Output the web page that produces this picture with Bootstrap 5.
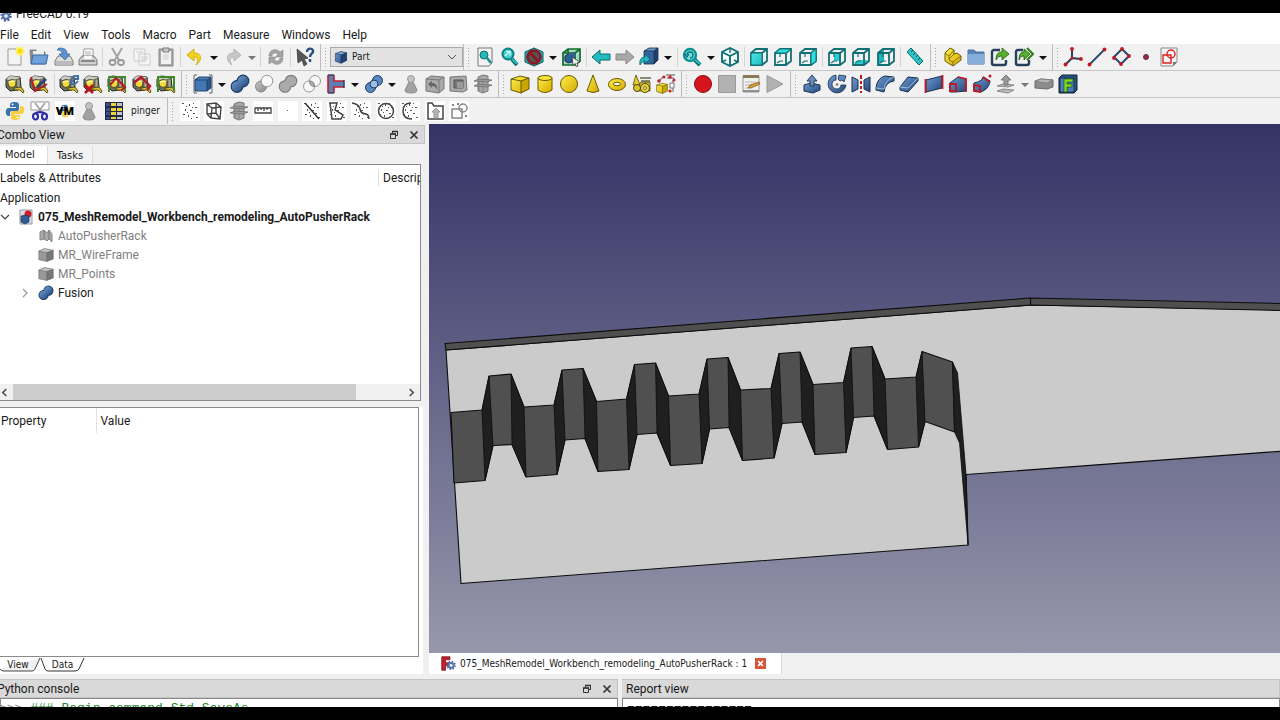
<!DOCTYPE html>
<html lang="en">
<head>
<meta charset="utf-8">
<meta name="viewport" content="width=device-width, initial-scale=1">
<title>FreeCAD 0.19</title>
<link href="https://cdn.jsdelivr.net/npm/bootstrap@5.3.0/dist/css/bootstrap.min.css" rel="stylesheet">
<style>
  :root { --ui: #f0f0f0; --title: #d9d9d9; --edge: #8a8a8a; }
  body { font-family: Roboto, "Open Sans", sans-serif; font-size: 12px; line-height: 16px; color: #1a1a1a; background: #000; padding: 13px 0; }
  button { color: inherit; }
  .tahoma { font-family: "DejaVu Sans Condensed", "DejaVu Sans", sans-serif; font-size: 10px; }
  .window { background: var(--ui); }
  .caption { height: 12px; background: #fff; padding-bottom: 3px; }
  .caption svg { width: 12px; height: 12px; }
  .menus { height: 19px; background: #fff; gap: 12px; }
  .menus a { color: #1a1a1a; text-decoration: none; }
  .bars { height: 27px; border-bottom: 1px solid #c6c6c6; background: #f1f1f1; }
  .bars:last-child { height: 26px; border-bottom: 0; }
  .tools { padding: 0 3px; border-right: 1px solid #bcbcbc; flex: none; }
  .tools:last-child { border-right: 0; }
  .tools svg { width: 20px; height: 20px; display: block; }
  .tbtn { width: 24px; height: 24px; border: 0; background: none; padding: 2px; }
  .drop { width: 13px; height: 24px; border: 0; background: none; padding: 0; }
  .drop::after { content: ""; display: block; margin: 2px auto 0; width: 0; border: 4px solid transparent; border-top-color: #111; border-bottom: 0; }
  .drop:disabled::after { border-top-color: #777; }
  .rule { width: 1px; height: 20px; margin: 0 2px; background: #d4d4d4; }
  .grip { width: 3px; height: 21px; margin-right: 3px; background: radial-gradient(circle, #a8a8a8 1px, transparent 1px) 0 0 / 3px 3px; }
  .w-file { width: 321px; } .w-bench { width: 143px; } .w-view { width: 467px; } .w-struct { width: 122px; } .w-sketch { width: 131px; }
  .w-measure { width: 182px; } .w-bool { width: 317px; } .w-solid { width: 183px; } .w-macro { width: 109px; } .w-part { width: 292px; }
  .w-custom { width: 168px; } .w-remodel { width: 306px; }
  .bench { height: 20px; border: 1px solid #aaa; background: #e2e2e2; padding: 0 3px; }
  .bench svg { width: 14px; height: 14px; flex: none; }
  .bench select { appearance: none; border: 0; background: none; padding: 0 4px; line-height: 16px; color: #1a1a1a; }
  .side { flex: 0 0 429px; }
  .dock { height: 19px; background: var(--title); border: 1px solid #c4c4c4; border-left: 0; }
  .dock button { border: 0; background: none; padding: 0; width: 20px; height: 17px; line-height: 0; }
  .dock svg { width: 10px; height: 10px; }
  .cut { margin-left: -3px; }
  .combo { margin: 1px 4px 0 0; }
  .tabs { height: 20px; padding-top: 2px; font-size: 11px; }
  .tabs button { border: 1px solid #dcdcdc; border-width: 0 1px 0 0; background: #f3f3f3; height: 18px; padding: 1px 9px 0; }
  .tabs button.on { background: #fff; padding: 0 12px 0 5px; }
  .tree { height: 237px; margin-right: 4px; background: #fff; border: 1px solid var(--edge); border-left: 0; }
  .head { height: 23px; padding-top: 2px; }
  .head div:last-child { width: 42px; border-left: 1px solid #ddd; padding-left: 4px; overflow: hidden; }
  .tree li { height: 19px; gap: 4px; }
  .tree li svg { width: 16px; height: 16px; flex: none; }
  .tree li svg.chev { width: 10px; height: 10px; }
  .tree li.off { color: #808080; }
  .lvl1 { padding-left: 38px; } .lvl1x { padding-left: 20px; }
  .hbar { height: 16px; background: var(--ui); }
  .hbar button { width: 13px; border: 0; background: none; padding: 0; line-height: 0; }
  .hbar svg { width: 9px; height: 9px; }
  .thumb { width: 87%; background: #cdcdcd; }
  .panel2 { background: #fff; border-bottom: 1px solid #ccc; margin-right: 2px; }
  .props { height: 250px; margin: 6px 4px 0 0; border: 1px solid var(--edge); border-left: 0; background: #fff; }
  .props table { width: 100%; }
  .props th { font-weight: 400; height: 25px; padding: 0 3px 0 1px; }
  .props th + th { border-left: 1px solid #e2e2e2; padding-left: 4px; }
  .props th:first-child { width: 96px; }
  .ears { height: 17px; }
  .ears button { border: 0; background: none; height: 15px; padding: 0; width: 53px; }
  .ears button:first-child { width: 36px; }
  .ears .slant { width: 100%; height: 15px; }
  .canvas { background: linear-gradient(#333366, #9797ac); }
  .docs { height: 21px; }
  .doc { background: #fff; padding: 0 15px 0 12px; gap: 4px; border-right: 1px solid #ddd; }
  .doc svg { width: 15px; height: 15px; }
  .doc button { border: 0; padding: 0; background: none; line-height: 0; }
  .doc button svg { width: 11px; height: 11px; margin-left: 4px; }
  .bottom { height: 28px; gap: 4px; margin-top: 5px; }
  .bottom section:first-child { flex: 0 0 618px; }
  .bottom .dock { border-right: 1px solid #c4c4c4; }
  .log { height: 22px; border: 1px solid var(--edge); padding-top: 2px; background: #fff; font-family: "Liberation Mono", monospace; font-size: 13px; line-height: 16px; white-space: pre; }
  .python { color: #1d8a2a; }
  .python b { font-weight: 400; color: #8a8a8a; margin-left: -2px; }
</style>
</head>
<body class="vh-100 overflow-hidden d-flex flex-column">

<svg width="0" height="0" class="position-absolute" aria-hidden="true">
  <defs>
    <linearGradient id="gb" x1="0" y1="0" x2="1" y2="1"><stop stop-color="#6f9bd0"/><stop offset="1" stop-color="#23497e"/></linearGradient>
    <linearGradient id="gg" x1="0" y1="0" x2="1" y2="1"><stop stop-color="#c4c4c4"/><stop offset="1" stop-color="#8a8a8a"/></linearGradient>
    <linearGradient id="gy" x1="0" y1="0" x2="1" y2="1"><stop stop-color="#fff04a"/><stop offset="1" stop-color="#d3a800"/></linearGradient>
    <linearGradient id="gt" x1="0" y1="0" x2="1" y2="1"><stop stop-color="#4be4e4"/><stop offset="1" stop-color="#1fc0c4"/></linearGradient>

    <symbol id="new" viewBox="0 0 20 20"><path d="M3 2h13v16H3z" fill="#f4f4f2" stroke="#999"/><circle cx="15" cy="4" r="4.500" fill="#fff36b"/><circle cx="15" cy="4" r="2.500" fill="#f4dc10"/></symbol>
    <symbol id="open" viewBox="0 0 20 20"><path d="M1 3h6l1 2h8v12H2z" fill="#8b8f94" stroke="#666" stroke-width=".7"/><path d="M4 4h11v5H4z" fill="#eee"/><path d="M4 8h15l-2 9H2z" fill="#6fa0d8" stroke="#3569a8"/></symbol>
    <symbol id="save" viewBox="0 0 20 20"><path d="M4 9h12l3 5v4H1v-4z" fill="#ddd" stroke="#777"/><path d="M2 14h16v4H2z" fill="#bbb"/><path d="M5 1c6 0 8 2 8 6h3l-5 6-6-6h3c0-3-1-4-5-4z" fill="#5d93d0" stroke="#2e5f9c" stroke-width=".7"/></symbol>
    <symbol id="print" viewBox="0 0 20 20"><path d="M6 2h9v9H5z" fill="#fff" stroke="#999"/><path d="M7 5h6M7 7h6" stroke="#aaa"/><path d="M4 9h12l3 4v5H1v-5z" fill="#d0d0d0" stroke="#777"/><path d="M3 13h14v2H3z" fill="#888"/><path d="M6 9h8v3H6z" fill="#f5f5f5"/></symbol>
    <symbol id="cut" viewBox="0 0 20 20"><path d="M5 1l7 12M15 1L8 13" stroke="#a4a4a4" stroke-width="2"/><ellipse cx="5.500" cy="15.500" rx="3" ry="2.500" fill="none" stroke="#999" stroke-width="1.800"/><ellipse cx="14" cy="15.500" rx="3" ry="2.500" fill="none" stroke="#999" stroke-width="1.800"/></symbol>
    <symbol id="copy" viewBox="0 0 20 20"><path d="M2 2h11v12H2zM7 7h11v11H7z" fill="#f5f5f5" stroke="#ccc"/><path d="M9 10h7M9 12h7M9 14h5M4 5h7" stroke="#ccc"/></symbol>
    <symbol id="paste" viewBox="0 0 20 20"><path d="M3 2h14v17H3z" fill="#aaa" stroke="#888"/><path d="M5 4h10v13H5z" fill="#f2f2f2"/><path d="M7 1h6v4H7z" fill="#ccc" stroke="#777"/><path d="M7 8h6M7 10h6M7 12h5" stroke="#ccc"/></symbol>
    <symbol id="undo" viewBox="0 0 20 20"><path d="M9 2L2 8l7 6v-4c4 0 5 3 2 8 6-4 7-12-2-12z" fill="#f2d21c" stroke="#c9a300" stroke-width=".8"/></symbol>
    <symbol id="redo" viewBox="0 0 20 20"><path d="M11 2l7 6-7 6v-4c-4 0-5 3-2 8C3 14 2 6 11 6z" fill="#c8c8c8" stroke="#aaa" stroke-width=".8"/></symbol>
    <symbol id="refresh" viewBox="0 0 20 20"><path d="M3 9c0-7 8-8 11-4l3-2v7h-7l2-3C9 5 6 6 6 9zM17 11c0 7-8 8-11 4l-3 2v-7h7l-2 3c3 2 6 1 6-2z" fill="#a4a4a4" stroke="#868686" stroke-width=".6"/></symbol>
    <symbol id="what" viewBox="0 0 20 20"><path d="M2 2l11 9-4 1 3 5-3 2-2-6-4 3z" fill="#555" stroke="#333" stroke-width=".7"/><path d="M12 5c0-5 7-4 6 0-1 2-3 2-3 5M15 12v3" fill="none" stroke="#27507f" stroke-width="2.400"/></symbol>
    <symbol id="cube" viewBox="0 0 20 20"><path d="M2 5l8-3 8 2v11l-8 4-8-3z" fill="url(#gb)"/><path d="M2 5l8 2 8-3-8-2z" fill="#79a2d6"/><path d="M10 7l8-3v11l-8 4z" fill="#204374"/><path d="M2 5l8 2 8-3M10 7v12M2 5l8-3 8 2v11l-8 4-8-3z" fill="none" stroke="#17304f" stroke-width=".8"/></symbol>
    <symbol id="bcube" viewBox="0 0 20 20"><path d="M2 5l4-2h12v11l-4 3H2z" fill="#2b558c"/><path d="M2 6l4-3h12l-4 3z" fill="#4f7db5"/><path d="M2 6h12v11H2z" fill="#4478b4"/><path d="M2 6h12v11H2zM2 6l4-3h12v11l-4 3M14 6l4-3" fill="none" stroke="#1c3d68" stroke-width=".9"/></symbol>
    <symbol id="gcube" viewBox="0 0 20 20"><path d="M1 5l7-3 11 2v11l-8 3-10-2z" fill="#999"/><path d="M1 5l9 2 9-3-11-2z" fill="#c4c4c4"/><path d="M11 7l8-3v11l-8 3z" fill="#777"/><path d="M1 5l7-3 11 2v11l-8 3-10-2zM1 5l10 2 8-3M11 7v11" fill="none" stroke="#666" stroke-width=".7"/></symbol>
    <symbol id="ycube" viewBox="0 0 20 20"><path d="M1 5l9-3 9 2v11l-8 4-10-3z" fill="url(#gy)"/><path d="M11 7l8-3v11l-8 4z" fill="#c8a800"/><path d="M1 5l9-3 9 2v11l-8 4-10-3zM1 5l10 2 8-3M11 7v12" fill="none" stroke="#5d4e00" stroke-width=".9"/></symbol>
    <symbol id="fit" viewBox="0 0 20 20"><path d="M3 1h14v15l-3 3H3z" fill="#f4f4f4" stroke="#777"/><circle cx="9" cy="8" r="4" fill="#28b8b8" stroke="#0a6f73"/><path d="M12 11l4 5" stroke="#0f8d90" stroke-width="2.500"/></symbol>
    <symbol id="zoom" viewBox="0 0 20 20"><path d="M11 11l6 7" stroke="#0a6569" stroke-width="4"/><path d="M11 11l6 6" stroke="#27c0c2" stroke-width="2"/><circle cx="8" cy="7" r="5.500" fill="#45cfcf" stroke="#0a7f83" stroke-width="2"/><path d="M5 9l4-4M6 4.500h4v4" stroke="#d7ffff" stroke-width="1.200" fill="none"/></symbol>
    <symbol id="nodraw" viewBox="0 0 20 20"><path d="M1 5l9-4 9 4v10l-9 4-9-4z" fill="#20b0b4" stroke="#0b6064"/><circle cx="10" cy="10" r="6.500" fill="#555" stroke="#8d1620" stroke-width="2.500"/><path d="M5.500 5.500l9 9" stroke="#8d1620" stroke-width="2.500"/></symbol>
    <symbol id="selbox" viewBox="0 0 20 20"><path d="M2 5l5-3h12v12l-5 4H2z" fill="#a8d8c4"/><path d="M2 6h12v12H2zM2 6l5-4h12v12l-5 4M14 6l5-4M7 2v4" fill="none" stroke="#0d6c2a" stroke-width="1.700"/><path d="M4 9l3-2 4 1v7l-4 1-3-2z" fill="#2f6098" stroke="#14304f"/><circle cx="11" cy="9" r="3.500" fill="#2f6098"/><path d="M11 10l8 5-3 1 1 3-2 .5-1-3-2 2z" fill="#eee" stroke="#222" stroke-width=".7"/></symbol>
    <symbol id="left" viewBox="0 0 20 20"><path d="M1 10l8-7v4h10v6H9v4z" fill="#22bcc0" stroke="#0a6c70"/></symbol>
    <symbol id="right" viewBox="0 0 20 20"><path d="M19 10l-8-7v4H1v6h10v4z" fill="#a8a8a8" stroke="#888"/></symbol>
    <symbol id="link" viewBox="0 0 20 20"><path d="M5 4l5-3h9v12l-4 4H5z" fill="#35639b"/><path d="M5 4l5-3h9l-4 3z" fill="#6c97cb"/><path d="M15 4l4-3v12l-4 4z" fill="#1e406e"/><path d="M5 4l5-3h9v12l-4 4H5zM5 4h10v13M15 4l4-3" fill="none" stroke="#17304f" stroke-width=".8"/><path d="M1 18c-1-6 2-8 5-8V7l5 5-5 5v-3c-2 0-3 1-5 4z" fill="#24b6c0" stroke="#0a5f66" stroke-width=".8"/></symbol>
    <symbol id="sync" viewBox="0 0 20 20"><path d="M12 12l6 6" stroke="#0a6569" stroke-width="4"/><path d="M12 12l6 5" stroke="#27c0c2" stroke-width="2"/><circle cx="8" cy="8" r="6" fill="#7be0e0" stroke="#0a8f93" stroke-width="2.400"/><path d="M5 8a3 3 0 1 1 3 3M3 7l2 3 2-3" stroke="#0a7175" stroke-width="1.300" fill="none"/></symbol>
    <symbol id="iso" viewBox="0 0 20 20"><path d="M2 5l8-4 8 4v10l-8 4-8-4z" fill="#f4fbfb"/><path d="M2 5l8-4 8 4v10l-8 4-8-4zM2 5l8 4 8-4M10 9v10" fill="none" stroke="#127074" stroke-width="1.900"/><path d="M2 15l4-2M18 15l-4-2M10 2v4" stroke="#127074" stroke-width="1.400"/></symbol>
    <symbol id="wire" viewBox="0 0 20 20"><path d="M2 6l5-4h11v12l-5 4H2zM2 6h11v12M13 6l5-4" fill="none" stroke="#127074" stroke-width="1.800"/><path d="M7 6v4M7 14h3M7 14l-3 2" fill="none" stroke="#127074" stroke-width="1.200"/></symbol>
    <symbol id="vfront" viewBox="0 0 20 20"><use href="#wire" width="20" height="20"/><path d="M2 6h11v12H2z" fill="url(#gt)" stroke="#127074"/></symbol>
    <symbol id="vtop" viewBox="0 0 20 20"><use href="#wire" width="20" height="20"/><path d="M2 6l5-4h11l-5 4z" fill="#2fe0e2" stroke="#127074"/></symbol>
    <symbol id="vright" viewBox="0 0 20 20"><use href="#wire" width="20" height="20"/><path d="M13 6l5-4v12l-5 4z" fill="#2fe0e2" stroke="#127074"/></symbol>
    <symbol id="vrear" viewBox="0 0 20 20"><path d="M7 6h7v8H7z" fill="#2bcdd0"/><use href="#wire" width="20" height="20"/></symbol>
    <symbol id="vbottom" viewBox="0 0 20 20"><path d="M7 13h10l-4 5H2z" fill="#2bcdd0"/><use href="#wire" width="20" height="20"/></symbol>
    <symbol id="vleft" viewBox="0 0 20 20"><path d="M2 6l6-4v12l-6 4z" fill="#1fb3b6"/><use href="#wire" width="20" height="20"/></symbol>
    <symbol id="ruler" viewBox="0 0 20 20"><path d="M2 5l4-4 12 13-4 4z" fill="#28c4c6" stroke="#0a6c70"/><path d="M8 3l-2 2M10 6L8 8M13 8l-2 2M15 11l-2 2" stroke="#075053"/></symbol>
    <symbol id="lego" viewBox="0 0 20 20"><path d="M3 6l5-5 4 2v4l3-1 4 3v4l-8 6-8-5z" fill="url(#gy)" stroke="#594a00" stroke-width=".9"/><path d="M3 6l4 3v4l4 2 8-6M7 9l5-6M11 15v4M7 12l5-5" fill="none" stroke="#7d6800" stroke-width=".9"/></symbol>
    <symbol id="folder" viewBox="0 0 20 20"><path d="M2 3h6l2 2h8v12H2z" fill="#5b86b8" stroke="#466f9e"/><path d="M2 7h16v10H2z" fill="#87aedb"/></symbol>
    <symbol id="export" viewBox="0 0 20 20"><path d="M10 3H4q-2 0-2 2v11q0 2 2 2h10q2 0 2-2v-3" fill="none" stroke="#26405c" stroke-width="2.400"/><path d="M6 13c0-6 2-8 6-8V1l7 6-7 6V9c-3 0-4 1-6 4z" fill="#58b030" stroke="#1d5a0d" stroke-width=".8"/></symbol>
    <symbol id="export2" viewBox="0 0 20 20"><path d="M13 1l6 6-6 6" fill="none" stroke="#2e7d18" stroke-width="2"/><path d="M9 3H4q-2 0-2 2v11q0 2 2 2h9q2 0 2-2v-3" fill="none" stroke="#26405c" stroke-width="2.400"/><path d="M5 13c0-6 2-8 5-8V2l6 5-6 6V9c-3 0-4 1-5 4z" fill="#58b030" stroke="#1d5a0d" stroke-width=".8"/></symbol>
    <symbol id="axes" viewBox="0 0 20 20"><path d="M9 2v9l9 1M9 11l-7 7" fill="none" stroke="#2e3d55" stroke-width="2"/><g fill="#c01824"><circle cx="9" cy="2" r="1.900"/><circle cx="18" cy="12" r="1.900"/><circle cx="2.500" cy="17.500" r="1.900"/><circle cx="9" cy="11" r="1.500"/></g></symbol>
    <symbol id="line" viewBox="0 0 20 20"><path d="M2 18L18 2" stroke="#2e4d75" stroke-width="2"/><circle cx="2.500" cy="17.500" r="1.900" fill="#c01824"/><circle cx="17.500" cy="2.500" r="1.900" fill="#c01824"/></symbol>
    <symbol id="diamond" viewBox="0 0 20 20"><path d="M11 2l7 7-8 8-7-7z" fill="none" stroke="#2e4d75" stroke-width="2.200"/><g fill="#c01824"><circle cx="11" cy="2" r="1.900"/><circle cx="18" cy="9" r="1.900"/><circle cx="10" cy="17" r="1.900"/><circle cx="3" cy="11" r="1.900"/></g></symbol>
    <symbol id="point" viewBox="0 0 20 20"><circle cx="11" cy="10" r="2.500" fill="#a52238" stroke="#4a3654"/></symbol>
    <symbol id="sketch" viewBox="0 0 20 20"><path d="M2 1h16v14l-4 4H2z" fill="#f4f4f4" stroke="#888"/><path d="M18 15h-4v4z" fill="#777"/><path d="M4 8h8v8H4z" fill="none" stroke="#d22" stroke-width="1.400"/><circle cx="12" cy="7" r="4" fill="none" stroke="#d22" stroke-width="1.400"/></symbol>

    <symbol id="tape" viewBox="0 0 20 20"><path d="M1 5l4-3 10 1 1 10-3 3-8 1-4-4z" fill="#6a6d66" stroke="#2b2d28"/><path d="M1 5l4-3 10 1-2 2-9 1z" fill="#c9cbc4"/><circle cx="7" cy="9.500" r="4" fill="#efd93c" stroke="#4d4a20"/><path d="M3.500 8l7-1" stroke="#fdf6a6" stroke-width="1.500"/><path d="M12 5h3v9h-3z" fill="#a9ab9a" stroke="#44463c" stroke-width=".6"/><path d="M9 14l7-1 3 4-1 2-3-3-6 0z" fill="#dcc12c" stroke="#4b430f" stroke-width=".9"/></symbol>
    <symbol id="tape2" viewBox="0 0 20 20"><use href="#tape" width="20" height="20"/><path d="M2 3l4 14 12-7" fill="none" stroke="#b81c28" stroke-width="2"/><path d="M8 13l9-8" stroke="#27446c" stroke-width="3"/></symbol>
    <symbol id="tape3" viewBox="0 0 20 20"><use href="#tape" width="20" height="20"/><path d="M12 5q3-5 7-2M19 7q-4 5-7 2M19 1v4h-3M12 11V7h3" fill="none" stroke="#3f6fa6" stroke-width="1.900"/></symbol>
    <symbol id="tape4" viewBox="0 0 20 20"><use href="#tape" width="20" height="20"/><path d="M2 11l8 8M10 11l-8 8" stroke="#b8141f" stroke-width="2.500"/></symbol>
    <symbol id="tape5" viewBox="0 0 20 20"><use href="#tape" width="20" height="20"/><path d="M2 18V3h16v14" fill="none" stroke="#3d8a26" stroke-width="1.800"/><path d="M3 11l6-7 9 9-4 4" fill="none" stroke="#b71c28" stroke-width="2.200"/></symbol>
    <symbol id="tape6" viewBox="0 0 20 20"><use href="#tape" width="20" height="20"/><path d="M2 9l7-6 9 9-3 4" fill="none" stroke="#b71c28" stroke-width="2.400"/></symbol>
    <symbol id="tape7" viewBox="0 0 20 20"><use href="#tape" width="20" height="20"/><path d="M2 18V3h16v14" fill="none" stroke="#3d8a26" stroke-width="2"/></symbol>
    <symbol id="boxsel" viewBox="0 0 20 20"><path d="M4 1H1v18h3M16 1h3v18h-3" fill="none" stroke="#555" stroke-width=".9"/><use href="#bcube" x="0" y="0" width="20" height="20"/></symbol>
    <symbol id="union" viewBox="0 0 20 20"><g stroke="#183862" stroke-width="1.800"><circle cx="13" cy="7" r="5.500"/><circle cx="7" cy="12.500" r="5.500"/></g><circle cx="13" cy="7" r="5.300" fill="url(#gb)"/><circle cx="7" cy="12.500" r="5.300" fill="url(#gb)"/></symbol>
    <symbol id="diff" viewBox="0 0 20 20"><circle cx="7" cy="12.500" r="5.500" fill="url(#gg)" stroke="#888"/><circle cx="13" cy="7" r="5.800" fill="#f7f7f7" stroke="#999"/></symbol>
    <symbol id="gunion" viewBox="0 0 20 20"><g stroke="#777" stroke-width="1.600"><circle cx="13" cy="7" r="5.500"/><circle cx="7" cy="12.500" r="5.500"/></g><circle cx="13" cy="7" r="5.300" fill="#aaa"/><circle cx="7" cy="12.500" r="5.300" fill="#aaa"/></symbol>
    <symbol id="inter" viewBox="0 0 20 20"><g fill="#f7f7f7" stroke="#999"><circle cx="13" cy="7" r="5.500"/><circle cx="7" cy="12.500" r="5.500"/></g><path d="M7.500 7q5 0 5 5.500-5 0-5-5.500z" fill="#aaa" stroke="#888"/></symbol>
    <symbol id="join" viewBox="0 0 20 20"><path d="M2 1h6v6h10v6H8v6H2z" fill="#5b7fb2"/><path d="M2 1v18M8 1v6h10M8 19v-6h10" fill="none" stroke="#c3202c" stroke-width="1.600"/><path d="M18 6v8M2 1h6M2 19h6" stroke="#2c466c" stroke-width="1.500"/></symbol>
    <symbol id="split" viewBox="0 0 20 20"><g fill="#5988c2" stroke="#1b3d6a"><circle cx="13.500" cy="6.500" r="5"/><circle cx="6.500" cy="13.500" r="5"/><circle cx="10" cy="10" r="4" fill="#9dbde4"/></g></symbol>
    <symbol id="pawn" viewBox="0 0 20 20"><path d="M8 8h4l4 8q0 3-6 3t-6-3z" fill="#a2a2a2" stroke="#888"/><circle cx="10" cy="5" r="3.500" fill="#c2c2c2" stroke="#999"/></symbol>
    <symbol id="defeat" viewBox="0 0 20 20"><path d="M1 5l5-3 13 1v12l-5 4-13-2z" fill="#a9a9a9" stroke="#777"/><path d="M1 5l13 1 5-3M14 6v12" fill="none" stroke="#777"/><path d="M3 10l4-3v2q6 0 5 7-1-4-5-4v2z" fill="#666"/></symbol>
    <symbol id="thick" viewBox="0 0 20 20"><path d="M1 3l16-1 1 14-4 2-13-1z" fill="#a9a9a9" stroke="#777"/><path d="M5 6h9v8H5z" fill="#777" stroke="#555"/><path d="M8 8h6v6H8z" fill="#999"/></symbol>
    <symbol id="layers" viewBox="0 0 20 20"><path d="M5 3l5-2 5 1v15l-5 2-5-2z" fill="#a8a8a8" stroke="#777"/><path d="M1 7l5-2 13 1-5 2zM1 12l5-2 13 1-5 2z" fill="#999" stroke="#6f6f6f" stroke-width=".8"/><path d="M6 8v2M6 13v3M10 8v3M10 13v5" stroke="#7b7b7b" stroke-width=".8"/></symbol>
    <symbol id="cyl" viewBox="0 0 20 20"><path d="M3 4v12q7 5 14 0V4z" fill="url(#gy)" stroke="#6a5800"/><ellipse cx="10" cy="4" rx="7" ry="2.500" fill="#f6e339" stroke="#6a5800"/></symbol>
    <symbol id="ball" viewBox="0 0 20 20"><circle cx="10" cy="10" r="8.500" fill="url(#gy)" stroke="#6a5800"/></symbol>
    <symbol id="cone" viewBox="0 0 20 20"><path d="M10 1l6 16q-6 3-12 0z" fill="url(#gy)" stroke="#6a5800"/></symbol>
    <symbol id="torus" viewBox="0 0 20 20"><ellipse cx="10" cy="10.500" rx="8.500" ry="6" fill="url(#gy)" stroke="#6a5800"/><ellipse cx="10" cy="10" rx="3.500" ry="1.800" fill="#f4f4f4" stroke="#6a5800"/></symbol>
    <symbol id="prims" viewBox="0 0 20 20"><path d="M8 4h11M9 7h9" stroke="#8d8a70" stroke-width="2"/><path d="M4 1l4 10H1z" fill="#e6cf2d" stroke="#564800" stroke-width=".8"/><path d="M9 8h9v9H4z" fill="#c9b93c" stroke="#555123" stroke-width=".8"/><circle cx="5" cy="14" r="3.500" fill="#d9c634" stroke="#564800"/><circle cx="13" cy="14" r="4.500" fill="#e6d236" stroke="#564800"/><circle cx="13" cy="14" r="1.500" fill="#f0f0f0" stroke="#564800" stroke-width=".7"/></symbol>
    <symbol id="builder" viewBox="0 0 20 20"><use href="#ycube" x="0" y="8" width="12" height="12"/><path d="M10 1h9M11 4h7M3 7l5-5M17 6v12" stroke="#888" stroke-width="1.300"/><g fill="#c3202c"><circle cx="3" cy="7" r="1.800"/><circle cx="8" cy="3" r="1.500"/><circle cx="14" cy="3" r="1.700"/><circle cx="18" cy="6" r="1.500"/></g><path d="M14 9h4v5h-4z" fill="#fff" stroke="#777"/><circle cx="14" cy="17" r="1.600" fill="#c3202c"/></symbol>
    <symbol id="rec" viewBox="0 0 20 20"><circle cx="10" cy="10" r="8.500" fill="#d5141c" stroke="#8c0a10"/></symbol>
    <symbol id="stop" viewBox="0 0 20 20"><path d="M1.500 1.500h17v17h-17z" fill="#b2b2b2" stroke="#999"/></symbol>
    <symbol id="note" viewBox="0 0 20 20"><path d="M2 2h16v16H2z" fill="#f1f1ec" stroke="#999"/><path d="M2 1h16v3H2z" fill="#8a7a58"/><path d="M2 17h16" stroke="#777" stroke-width="1.500"/><path d="M4 8h11M4 11h7M4 14h4" stroke="#bbb"/><path d="M7 14l2-3 9-3 1 2-9 4z" fill="#d99a3a" stroke="#7a5217" stroke-width=".7"/></symbol>
    <symbol id="play" viewBox="0 0 20 20"><path d="M2 1.500L18 10 2 18.500z" fill="#b2b2b2" stroke="#999"/></symbol>
    <symbol id="extrude" viewBox="0 0 20 20"><path d="M2 11l7-2 9 2v5l-7 3-9-2z" fill="url(#gb)" stroke="#17304f"/><path d="M10 1l5 6h-3v5H8V7H5z" fill="#6b8fbd" stroke="#17304f" stroke-width=".9"/></symbol>
    <symbol id="revolve" viewBox="0 0 20 20"><path d="M9 1a9 9 0 1 0 10 10h-5a4.500 4.500 0 1 1-5-5z" fill="url(#gb)" stroke="#17304f" stroke-width=".8"/><path d="M12 1l7 1-2 6-2-2-2 1-2-2z" fill="#5d88bd" stroke="#17304f" stroke-width=".8"/><circle cx="10" cy="10.500" r="1.300" fill="#777"/></symbol>
    <symbol id="mirror" viewBox="0 0 20 20"><path d="M1 3l6 3v9l-6 3zM19 3l-6 3v9l6 3z" fill="url(#gb)" stroke="#17304f"/><path d="M10 1v4M10 7v3M10 12v3M10 17v2" stroke="#c01824" stroke-width="2"/></symbol>
    <symbol id="fillet" viewBox="0 0 20 20"><path d="M1 14Q2 4 10 2l9 1v4q-9 1-10 11l-8-2z" fill="url(#gb)" stroke="#17304f"/><path d="M1 14l8 1Q10 6 19 3" fill="none" stroke="#c4d7ee" stroke-width=".7"/></symbol>
    <symbol id="chamfer" viewBox="0 0 20 20"><path d="M1 13L9 3l10 1v3L9 18l-8-2z" fill="url(#gb)" stroke="#17304f"/><path d="M1 13l8 1 10-10" fill="none" stroke="#c4d7ee" stroke-width=".7"/></symbol>
    <symbol id="ruled" viewBox="0 0 20 20"><path d="M2 6l16-4v12L2 18z" fill="url(#gb)" stroke="#17304f"/><path d="M1.500 5v14M18.500 1v14" stroke="#c01824" stroke-width="1.800"/></symbol>
    <symbol id="loft" viewBox="0 0 20 20"><path d="M2 9l8-6 8 2v12l-10 1H2z" fill="url(#gb)" stroke="#17304f"/><path d="M2 10h6v7H2zM10 3l8 2v13" fill="none" stroke="#c01824" stroke-width="1.800"/></symbol>
    <symbol id="sweep" viewBox="0 0 20 20"><path d="M2 9l4-1q5-2 5-5l7 4q-1 8-9 11l-7-1z" fill="url(#gb)" stroke="#17304f"/><path d="M2 11l6 1v6l-6-1zM11 3l7 5" fill="none" stroke="#c01824" stroke-width="1.800"/><circle cx="18" cy="2" r="1.500" fill="#c01824"/></symbol>
    <symbol id="offset" viewBox="0 0 20 20"><path d="M1 17l6-2 11 1-6 3zM1 12l6-2 11 1-6 2z" fill="#bbb" stroke="#888"/><path d="M10 1l5 5h-3v5H8V6H5z" fill="#999" stroke="#777"/></symbol>
    <symbol id="slab" viewBox="0 0 20 20"><path d="M1 7l6-2 12 1v7l-6 2-12-1z" fill="#8c8c8c" stroke="#6b6b6b"/><path d="M1 7l6-2 12 1-6 3z" fill="#b5b5b5" stroke="#777" stroke-width=".7"/></symbol>
    <symbol id="fbox" viewBox="0 0 20 20"><path d="M1 4l3-3h15v15l-3 3H1z" fill="#2b5685" stroke="#0c1c30"/><path d="M2 4h14v14H2z" fill="#4b80b5" stroke="#0c1c30" stroke-width=".7"/><path d="M6 5h9v3H9v2h5v3H9v5H6z" fill="#7fdc22" stroke="#1a3f0c" stroke-width=".6"/></symbol>

    <symbol id="py" viewBox="0 0 20 20"><path d="M10 1c-4 0-5 1-5 3v2h6v1H3c-3 1-3 7 0 8h2v-3q0-2 2-2h5q2 0 2-2V4q0-3-4-3z" fill="#3872a8"/><path d="M10 19c4 0 5-1 5-3v-2H9v-1h8c3-1 3-7 0-8h-2v3q0 2-2 2H8q-2 0-2 2v4q0 3 4 3z" fill="#f6ce40"/><circle cx="7.500" cy="3.500" r="1" fill="#fff"/><circle cx="12.500" cy="16.500" r="1" fill="#fff"/></symbol>
    <symbol id="scis" viewBox="0 0 20 20"><path d="M1 1h18v8H1z" fill="#fff" stroke="#999"/><path d="M5 2l7 9M15 2l-7 9" stroke="#999" stroke-width="1.400"/><g fill="none" stroke="#2c2fa8" stroke-width="2.200"><ellipse cx="5.500" cy="15.500" rx="2.500" ry="3"/><ellipse cx="14.500" cy="15.500" rx="2.500" ry="3"/><path d="M5 12l5-1 5 1"/></g></symbol>
    <symbol id="vm" viewBox="0 0 20 20"><path d="M0 0h20v20H0z" fill="#fff"/><use href="#py" x="3" y="0" width="14" height="20"/><text x="10" y="14" text-anchor="middle" font-family="Open Sans, sans-serif" font-weight="800" font-size="11">VM</text></symbol>
    <symbol id="gridy" viewBox="0 0 20 20"><path d="M1 1h18v18H1z" fill="#23284a"/><path d="M2 2h4v3H2zM2 7h4v3H2zM2 11h4v3H2zM2 16h4v2H2z" fill="#3f4f8a"/><path d="M7 2h5v3H7zM7 7h5v3H7zM7 11h5v3H7zM7 16h5v2H7zM13 7h5v3h-5z" fill="#ecd530"/><path d="M13 2h5v3h-5zM13 11h5v3h-5zM13 16h5v2h-5z" fill="#c3c4c6"/></symbol>
    <symbol id="pts" viewBox="0 0 20 20"><path d="M0 0h20v20H0z" fill="#fff"/><path d="M2 2h2v1H2zM9 3h1v2H9zM15 6h2v1h-2zM5 8h1v2H5zM10 9h2v1h-2zM3 13h2v1H3zM8 14h1v2H8zM13 12h2v1h-2zM16 16h2v1h-2zM11 17h1v1h-1zM13 2h1v1h-1zM7 11h1v1H7zM6 5h1v1H6zM12 6h1v1h-1z" fill="#555"/></symbol>
    <symbol id="wbox" viewBox="0 0 20 20"><path d="M0 0h20v20H0z" fill="#fff"/><path d="M3 3l9-1 5 4-1 12-9-1-4-4zM3 3l5 4 9-1M8 7L7 17M12 2v10l4 6M12 12l-9 1" fill="none" stroke="#444" stroke-width="1.400"/></symbol>
    <symbol id="rule" viewBox="0 0 20 20"><path d="M0 0h20v20H0z" fill="#fff"/><path d="M2 7h16v5H2zM5 7v3M8 7v2M11 7v3M14 7v2" fill="none" stroke="#444" stroke-width="1.300"/></symbol>
    <symbol id="dot" viewBox="0 0 20 20"><path d="M0 0h20v20H0z" fill="#fff"/><path d="M9 9h1v1H9z" fill="#666"/></symbol>
    <symbol id="pline" viewBox="0 0 20 20"><use href="#pts" width="20" height="20"/><path d="M3 2l14 16" stroke="#333" stroke-width="1.500"/></symbol>
    <symbol id="ppoly" viewBox="0 0 20 20"><use href="#pts" width="20" height="20"/><path d="M3 2h7l-2 7 8 5-2 4H5z" fill="none" stroke="#444" stroke-width="1.500"/></symbol>
    <symbol id="pspl" viewBox="0 0 20 20"><use href="#pts" width="20" height="20"/><path d="M1 2q7 1 8 6t6 5q3 1 3 5" fill="none" stroke="#444" stroke-width="1.500"/></symbol>
    <symbol id="pcirc" viewBox="0 0 20 20"><use href="#pts" width="20" height="20"/><circle cx="10" cy="10" r="7.500" fill="none" stroke="#444" stroke-width="1.500"/></symbol>
    <symbol id="parc" viewBox="0 0 20 20"><use href="#pts" width="20" height="20"/><path d="M11 2q-8 0-8 8t9 8" fill="none" stroke="#444" stroke-width="1.500"/></symbol>
    <symbol id="pup" viewBox="0 0 20 20"><path d="M0 0h20v20H0z" fill="#fff"/><path d="M3 18V2h4l2 3h9v13z" fill="none" stroke="#444" stroke-width="1.500"/><path d="M11 7l4 4h-2v6H9v-6H7z" fill="#b5b5b5" stroke="#999"/></symbol>
    <symbol id="pmerge" viewBox="0 0 20 20"><path d="M0 0h20v20H0z" fill="#fff"/><path d="M3 8h10v9H3z" fill="none" stroke="#888" stroke-width="1.500"/><circle cx="14" cy="7" r="4" fill="none" stroke="#888" stroke-width="1.500"/><path d="M3 3h2v2H3zM8 2h2v2H8zM16 14h2v2h-2z" fill="#888"/></symbol>

    <symbol id="float" viewBox="0 0 10 10"><path d="M3.500 3V1.500h5v4H7M1.500 4h5v4.500h-5z" fill="none" stroke="#333"/><path d="M3 1.500h6M1 4h6" stroke="#333" stroke-width="1.500"/></symbol>
    <symbol id="cross" viewBox="0 0 10 10"><path d="M1.500 1.500l7 7M8.500 1.500l-7 7" stroke="#333" stroke-width="1.700"/></symbol>
    <symbol id="gear" viewBox="0 0 20 20"><circle cx="10" cy="10" r="7" fill="#5677ad"/><circle cx="10" cy="10" r="8" fill="none" stroke="#405f94" stroke-width="3" stroke-dasharray="3.200 3.080"/><circle cx="10" cy="10" r="3" fill="#eef2fa"/></symbol>
    <symbol id="fc" viewBox="0 0 20 20"><path d="M1 1h11v4H6v4h5v4H6v6H1z" fill="#c3202c" stroke="#7a0c14"/><use href="#gear" x="7" y="6" width="13" height="13"/></symbol>
    <symbol id="docu" viewBox="0 0 16 16"><path d="M2 1h12v14H2z" fill="#dcdfe8" stroke="#999"/><circle cx="10" cy="5" r="3.500" fill="#d01c28"/><path d="M3 7l4-1 4 1v6l-4 2-4-2z" fill="#2f5b96" stroke="#17304f" stroke-width=".6"/></symbol>
    <symbol id="mesh" viewBox="0 0 16 16"><path d="M2 12V4l4-2 3 3 2-3 3 4v8l-3-3-2 2-3-2z" fill="#aaa" stroke="#888"/><path d="M6 2v9M11 2v9" stroke="#777"/></symbol>
  </defs>
</svg>

<div class="window flex-fill d-flex flex-column overflow-hidden">
  <header>
    <div class="caption d-flex align-items-end gap-1 overflow-hidden"><svg aria-hidden="true"><use href="#gear"/></svg><span>FreeCAD 0.19</span></div>
    <nav class="menus d-flex align-items-center" aria-label="Main menu">
      <a href="#">File</a><a href="#">Edit</a><a href="#">View</a><a href="#">Tools</a><a href="#">Macro</a><a href="#">Part</a><a href="#">Measure</a><a href="#">Windows</a><a href="#">Help</a>
    </nav>

    <div>
    <div class="bars d-flex">
      <div class="tools w-file d-flex align-items-center justify-content-between">
        <button class="tbtn" aria-label="New"><svg><use href="#new"/></svg></button>
        <button class="tbtn" aria-label="Open"><svg><use href="#open"/></svg></button>
        <button class="tbtn" aria-label="Save"><svg><use href="#save"/></svg></button>
        <button class="tbtn" aria-label="Print"><svg><use href="#print"/></svg></button>
        <i class="rule"></i>
        <button class="tbtn" aria-label="Cut"><svg><use href="#cut"/></svg></button>
        <button class="tbtn" aria-label="Copy"><svg><use href="#copy"/></svg></button>
        <button class="tbtn" aria-label="Paste"><svg><use href="#paste"/></svg></button>
        <i class="rule"></i>
        <button class="tbtn" aria-label="Undo"><svg><use href="#undo"/></svg></button>
        <button class="drop" aria-label="Undo list"></button>
        <button class="tbtn" aria-label="Redo"><svg><use href="#redo"/></svg></button>
        <button class="drop" aria-label="Redo list" disabled></button>
        <i class="rule"></i>
        <button class="tbtn" aria-label="Refresh"><svg><use href="#refresh"/></svg></button>
        <i class="rule"></i>
        <button class="tbtn" aria-label="What's this"><svg><use href="#what"/></svg></button>
      </div>
      <div class="tools w-bench d-flex align-items-center pe-0">
        <i class="grip"></i>
        <div class="bench d-flex align-items-center flex-fill">
          <svg aria-hidden="true"><use href="#cube"/></svg>
          <select class="flex-fill tahoma" aria-label="Workbench"><option>Part</option></select>
          <svg viewBox="0 0 14 14" aria-hidden="true"><path d="M3 5l4 4 4-4" fill="none" stroke="#555"/></svg>
        </div>
      </div>
      <div class="tools w-view d-flex align-items-center justify-content-between">
        <i class="grip"></i>
        <button class="tbtn" aria-label="Fit all"><svg><use href="#fit"/></svg></button>
        <button class="tbtn" aria-label="Fit selection"><svg><use href="#zoom"/></svg></button>
        <button class="tbtn" aria-label="Draw style"><svg><use href="#nodraw"/></svg></button>
        <button class="drop" aria-label="Draw styles"></button>
        <button class="tbtn" aria-label="Bounding box"><svg><use href="#selbox"/></svg></button>
        <i class="rule"></i>
        <button class="tbtn" aria-label="Back"><svg><use href="#left"/></svg></button>
        <button class="tbtn" aria-label="Forward"><svg><use href="#right"/></svg></button>
        <button class="tbtn" aria-label="Linked object"><svg><use href="#link"/></svg></button>
        <button class="drop" aria-label="Link actions"></button>
        <i class="rule"></i>
        <button class="tbtn" aria-label="Sync view"><svg><use href="#sync"/></svg></button>
        <button class="drop" aria-label="Sync options"></button>
        <button class="tbtn" aria-label="Isometric"><svg><use href="#iso"/></svg></button>
        <i class="rule"></i>
        <button class="tbtn" aria-label="Front"><svg><use href="#vfront"/></svg></button>
        <button class="tbtn" aria-label="Top"><svg><use href="#vtop"/></svg></button>
        <button class="tbtn" aria-label="Right"><svg><use href="#vright"/></svg></button>
        <i class="rule"></i>
        <button class="tbtn" aria-label="Rear"><svg><use href="#vrear"/></svg></button>
        <button class="tbtn" aria-label="Bottom"><svg><use href="#vbottom"/></svg></button>
        <button class="tbtn" aria-label="Left"><svg><use href="#vleft"/></svg></button>
        <i class="rule"></i>
        <button class="tbtn" aria-label="Measure distance"><svg><use href="#ruler"/></svg></button>
      </div>
      <div class="tools w-struct d-flex align-items-center justify-content-between">
        <i class="grip"></i>
        <button class="tbtn" aria-label="Create part"><svg><use href="#lego"/></svg></button>
        <button class="tbtn" aria-label="Create group"><svg><use href="#folder"/></svg></button>
        <button class="tbtn" aria-label="Make link"><svg><use href="#export"/></svg></button>
        <button class="tbtn" aria-label="Make sub-link"><svg><use href="#export2"/></svg></button>
        <button class="drop" aria-label="Link menu"></button>
      </div>
      <div class="tools w-sketch d-flex align-items-center justify-content-between">
        <i class="grip"></i>
        <button class="tbtn" aria-label="Coordinate system"><svg><use href="#axes"/></svg></button>
        <button class="tbtn" aria-label="Datum line"><svg><use href="#line"/></svg></button>
        <button class="tbtn" aria-label="Datum plane"><svg><use href="#diamond"/></svg></button>
        <button class="tbtn" aria-label="Datum point"><svg><use href="#point"/></svg></button>
        <button class="tbtn" aria-label="New sketch"><svg><use href="#sketch"/></svg></button>
      </div>
    </div>

    <div class="bars d-flex">
      <div class="tools w-measure d-flex align-items-center justify-content-between">
        <button class="tbtn" aria-label="Measure linear"><svg><use href="#tape"/></svg></button>
        <button class="tbtn" aria-label="Measure angular"><svg><use href="#tape2"/></svg></button>
        <i class="rule"></i>
        <button class="tbtn" aria-label="Refresh measures"><svg><use href="#tape3"/></svg></button>
        <button class="tbtn" aria-label="Clear measures"><svg><use href="#tape4"/></svg></button>
        <button class="tbtn" aria-label="Toggle all"><svg><use href="#tape5"/></svg></button>
        <button class="tbtn" aria-label="Toggle 3D"><svg><use href="#tape6"/></svg></button>
        <button class="tbtn" aria-label="Toggle delta"><svg><use href="#tape7"/></svg></button>
      </div>
      <div class="tools w-bool d-flex align-items-center justify-content-between">
        <i class="grip"></i>
        <button class="tbtn" aria-label="Compound"><svg><use href="#boxsel"/></svg></button>
        <button class="drop" aria-label="Compound tools"></button>
        <button class="tbtn" aria-label="Boolean"><svg><use href="#union"/></svg></button>
        <button class="tbtn" aria-label="Cut shapes"><svg><use href="#diff"/></svg></button>
        <button class="tbtn" aria-label="Union"><svg><use href="#gunion"/></svg></button>
        <button class="tbtn" aria-label="Intersection"><svg><use href="#inter"/></svg></button>
        <button class="tbtn" aria-label="Join"><svg><use href="#join"/></svg></button>
        <button class="drop" aria-label="Join tools"></button>
        <button class="tbtn" aria-label="Split"><svg><use href="#split"/></svg></button>
        <button class="drop" aria-label="Split tools"></button>
        <button class="tbtn" aria-label="Check geometry"><svg><use href="#pawn"/></svg></button>
        <button class="tbtn" aria-label="Defeaturing"><svg><use href="#defeat"/></svg></button>
        <button class="tbtn" aria-label="Section"><svg><use href="#thick"/></svg></button>
        <button class="tbtn" aria-label="Cross-sections"><svg><use href="#layers"/></svg></button>
      </div>
      <div class="tools w-solid d-flex align-items-center justify-content-between">
        <i class="grip"></i>
        <button class="tbtn" aria-label="Box"><svg><use href="#ycube"/></svg></button>
        <button class="tbtn" aria-label="Cylinder"><svg><use href="#cyl"/></svg></button>
        <button class="tbtn" aria-label="Sphere"><svg><use href="#ball"/></svg></button>
        <button class="tbtn" aria-label="Cone"><svg><use href="#cone"/></svg></button>
        <button class="tbtn" aria-label="Torus"><svg><use href="#torus"/></svg></button>
        <button class="tbtn" aria-label="Primitives"><svg><use href="#prims"/></svg></button>
        <button class="tbtn" aria-label="Shape builder"><svg><use href="#builder"/></svg></button>
      </div>
      <div class="tools w-macro d-flex align-items-center justify-content-between">
        <i class="grip"></i>
        <button class="tbtn" aria-label="Record macro"><svg><use href="#rec"/></svg></button>
        <button class="tbtn" aria-label="Stop macro"><svg><use href="#stop"/></svg></button>
        <button class="tbtn" aria-label="Macros"><svg><use href="#note"/></svg></button>
        <button class="tbtn" aria-label="Run macro"><svg><use href="#play"/></svg></button>
      </div>
      <div class="tools w-part d-flex align-items-center justify-content-between">
        <i class="grip"></i>
        <button class="tbtn" aria-label="Extrude"><svg><use href="#extrude"/></svg></button>
        <button class="tbtn" aria-label="Revolve"><svg><use href="#revolve"/></svg></button>
        <button class="tbtn" aria-label="Mirror"><svg><use href="#mirror"/></svg></button>
        <button class="tbtn" aria-label="Fillet"><svg><use href="#fillet"/></svg></button>
        <button class="tbtn" aria-label="Chamfer"><svg><use href="#chamfer"/></svg></button>
        <button class="tbtn" aria-label="Ruled surface"><svg><use href="#ruled"/></svg></button>
        <button class="tbtn" aria-label="Loft"><svg><use href="#loft"/></svg></button>
        <button class="tbtn" aria-label="Sweep"><svg><use href="#sweep"/></svg></button>
        <button class="tbtn" aria-label="Offset"><svg><use href="#offset"/></svg></button>
        <button class="drop" aria-label="Offset tools" disabled></button>
        <button class="tbtn" aria-label="Thickness"><svg><use href="#slab"/></svg></button>
        <button class="tbtn" aria-label="Function box"><svg><use href="#fbox"/></svg></button>
      </div>
    </div>

    <div class="bars d-flex">
      <div class="tools w-custom d-flex align-items-center justify-content-between">
        <button class="tbtn" aria-label="Python"><svg><use href="#py"/></svg></button>
        <button class="tbtn" aria-label="Snip"><svg><use href="#scis"/></svg></button>
        <button class="tbtn" aria-label="VM"><svg><use href="#vm"/></svg></button>
        <button class="tbtn" aria-label="Check"><svg><use href="#pawn"/></svg></button>
        <button class="tbtn" aria-label="Spreadsheet"><svg><use href="#gridy"/></svg></button>
        <button class="tahoma border-0 bg-transparent px-1 py-0">pinger</button>
      </div>
      <div class="tools w-remodel d-flex align-items-center justify-content-between">
        <i class="grip"></i>
        <button class="tbtn" aria-label="Points object"><svg><use href="#pts"/></svg></button>
        <button class="tbtn" aria-label="Wireframe object"><svg><use href="#wbox"/></svg></button>
        <button class="tbtn" aria-label="Mesh sections"><svg><use href="#layers"/></svg></button>
        <button class="tbtn" aria-label="Point distance"><svg><use href="#rule"/></svg></button>
        <button class="tbtn" aria-label="Create point"><svg><use href="#dot"/></svg></button>
        <button class="tbtn" aria-label="Create line"><svg><use href="#pline"/></svg></button>
        <button class="tbtn" aria-label="Create polygon"><svg><use href="#ppoly"/></svg></button>
        <button class="tbtn" aria-label="Create spline"><svg><use href="#pspl"/></svg></button>
        <button class="tbtn" aria-label="Create circle"><svg><use href="#pcirc"/></svg></button>
        <button class="tbtn" aria-label="Create arc"><svg><use href="#parc"/></svg></button>
        <button class="tbtn" aria-label="Create wire"><svg><use href="#pup"/></svg></button>
        <button class="tbtn" aria-label="Merge sketches"><svg><use href="#pmerge"/></svg></button>
      </div>
    </div>
    </div>
  </header>

  <main class="d-flex flex-fill overflow-hidden">
    <aside class="side d-flex flex-column">
      <div class="combo">
        <div class="dock d-flex align-items-center"><span class="cut me-auto">Combo View</span><button aria-label="Float panel"><svg><use href="#float"/></svg></button><button aria-label="Close panel"><svg><use href="#cross"/></svg></button></div>
        <div class="tabs tahoma d-flex" role="tablist"><button class="on" role="tab">Model</button><button role="tab">Tasks</button></div>
        <div class="tree d-flex flex-column">
          <div class="head d-flex align-items-center"><div class="flex-fill">Labels &amp; Attributes</div><div>Descrip</div></div>
          <ul class="list-unstyled mb-0 flex-fill">
            <li class="d-flex align-items-center">Application</li>
            <li class="d-flex align-items-center gap-2"><svg class="chev" viewBox="0 0 10 10"><path d="M1 3l4 4 4-4" fill="none" stroke="#444" stroke-width="1.200"/></svg><span class="d-flex gap-1"><svg><use href="#docu"/></svg><b>075_MeshRemodel_Workbench_remodeling_AutoPusherRack</b></span></li>
            <li class="d-flex align-items-center lvl1 off"><svg><use href="#mesh"/></svg>AutoPusherRack</li>
            <li class="d-flex align-items-center lvl1 off"><svg><use href="#gcube"/></svg>MR_WireFrame</li>
            <li class="d-flex align-items-center lvl1 off"><svg><use href="#gcube"/></svg>MR_Points</li>
            <li class="d-flex align-items-center lvl1x"><svg class="chev me-1" viewBox="0 0 10 10"><path d="M3 1l4 4-4 4" fill="none" stroke="#999" stroke-width="1.200"/></svg><svg><use href="#union"/></svg>Fusion</li>
          </ul>
          <div class="hbar d-flex"><button class="text-start" aria-label="Scroll left"><svg viewBox="0 0 10 10"><path d="M7 1L3 5l4 4" fill="none" stroke="#444" stroke-width="1.600"/></svg></button><div class="flex-fill d-flex"><div class="thumb"></div></div><button class="text-start" aria-label="Scroll right"><svg viewBox="0 0 10 10"><path d="M3 1l4 4-4 4" fill="none" stroke="#444" stroke-width="1.600"/></svg></button></div>
        </div>
        <div class="panel2">
          <div class="props"><table><thead><tr><th scope="col">Property</th><th scope="col">Value</th></tr></thead></table></div>
          <div class="ears tahoma position-relative">
            <svg class="slant position-absolute top-0 start-0" aria-hidden="true"><path d="M0 12q1 2 4 2h28q2 0 3-2l5-11" fill="#f0f0f0" stroke="#444"/><path d="M41 1l4 11q1 2 3 2h27q3 0 4-2l5-11" fill="#fff" stroke="#333"/></svg>
            <div class="d-flex position-relative" role="tablist"><button role="tab">View</button><button role="tab">Data</button></div>
          </div>
        </div>
      </div>
    </aside>

    <section class="flex-fill d-flex flex-column overflow-hidden">
      <div class="canvas flex-fill overflow-hidden">
        <svg class="d-block w-100 h-100" viewBox="429 124 851 529" preserveAspectRatio="xMinYMin slice" stroke="#0c0c0c" stroke-width="1.100" stroke-linejoin="round" role="img" aria-label="Rack part with seven teeth">
          <path d="M446 350L1031 305 1284 310 V451L966 474.500 968 545 461 583.500z" fill="#cbcbcb"/>
          <path d="M445 343.500L1030 298 1284 303.500V310.500L1031 305 446 350z" fill="#4f4f4f"/>
          <path d="M1030.500 298v7"/>
          <path fill="#505050" d="M451 412.500L482 410 489 376 511 374 524 407 554 405 562 370 583 368.500 596.500 401.500 626.500 399 634.500 364.500 655.500 363 668.500 396 699 394 707 359 728 357.500 740.500 390 771 388.500 779 353.500 800 352 813 384.500 843.500 382.500 851 348 872 346.500 885 379 916 377 922 351.500 952.500 362 954.500 432 925 421.500 918.500 447 887.500 449.500 874 416 853.500 417.500 846 452.500 815 454.500 802 422 782 423.500 774 458 742.500 460.500 729 427.500 709.500 429 702 463.500 670.500 465.500 657 433 637 434.500 629 469.500 598 471.500 585 438.500 565 440 557 474.500 526 477 512 444.500 493 445.500 485 480.500 454 483z"/>
          <path fill="#1f1f1f" stroke-width=".8" d="M482 410L489 376 493 445.500 485 480.500zM511 374L524 407 526 477 512 444.500zM554 405L562 370 565 440 557 474.500zM583 368.500L596.500 401.500 598 471.500 585 438.500zM626.500 399L634.500 364.500 637 434.500 629 469.500zM655.500 363L668.500 396 670.500 465.500 657 433zM699 394L707 359 709.500 429 702 463.500zM728 357.500L740.500 390 742.500 460.500 729 427.500zM771 388.500L779 353.500 782 423.500 774 458zM800 352L813 384.500 815 454.500 802 422zM843.500 382.500L851 348 853.500 417.500 846 452.500zM872 346.500L885 379 887.500 449.500 874 416zM916 377L922 351.500 925 421.500 918.500 447zM952.500 362L957.500 373 966 474.500 968 545 959.500 443 954.500 432z"/>
        </svg>
      </div>
      <div class="docs d-flex">
        <div class="doc tahoma d-flex align-items-center"><svg aria-hidden="true"><use href="#fc"/></svg><span>075_MeshRemodel_Workbench_remodeling_AutoPusherRack : 1</span><button aria-label="Close document"><svg viewBox="0 0 12 12"><path d="M0 0h12v12H0z" fill="#d9553a"/><path d="M3.500 3.500l5 5M8.500 3.500l-5 5" stroke="#fff" stroke-width="1.800"/></svg></button></div>
      </div>
    </section>
  </main>

  <footer class="bottom d-flex overflow-hidden">
    <section>
      <div class="dock d-flex align-items-center"><span class="cut me-auto">Python console</span><button aria-label="Float console"><svg><use href="#float"/></svg></button><button aria-label="Close console"><svg><use href="#cross"/></svg></button></div>
      <div class="log python"><b>&gt;&gt;&gt; </b>### Begin command Std_SaveAs</div>
    </section>
    <section class="flex-fill">
      <div class="dock d-flex align-items-center ps-1">Report view</div>
      <div class="log ps-1">================</div>
    </section>
  </footer>
</div>

<script src="https://cdn.jsdelivr.net/npm/bootstrap@5.3.0/dist/js/bootstrap.bundle.min.js"></script>
</body>
</html>
